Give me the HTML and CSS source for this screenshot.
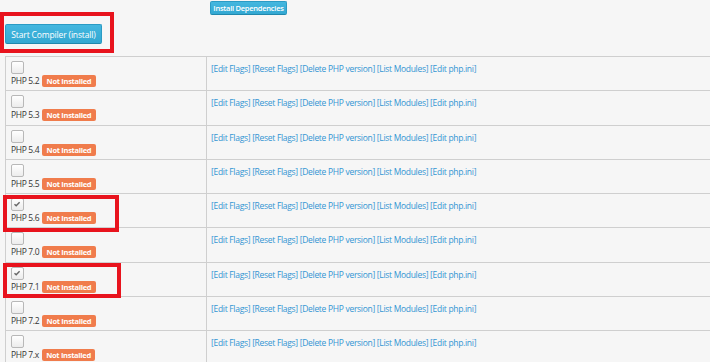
FILE: index.html
```html
<!DOCTYPE html>
<html lang="en">

<head>
    <meta charset="UTF-8">
    <meta name="viewport" content="width=device-width, initial-scale=1.0">
    <title>PHP Compiler</title>
    <link rel="stylesheet" href="styles.css">
</head>

<body>
    <div class="top">
        <div class="top-left">
            <div class="marked">
                <button class="btn btn-big">Start Compiler (install)</button>
                <span class="mark mark-start"></span>
            </div>
        </div>
        <div class="top-right">
            <button class="btn btn-small">Install Dependencies</button>
        </div>
    </div>

    <table class="versions">
        <tr>
            <td class="ver">
                <span class="check"></span>
                <div class="name">PHP 5.2 <span class="badge">Not Installed</span></div>
            </td>
            <td class="links"><a href="#">[Edit Flags]</a> <a href="#">[Reset Flags]</a> <a href="#">[Delete PHP version]</a> <a href="#">[List Modules]</a> <a href="#">[Edit php.ini]</a></td>
        </tr>
        <tr>
            <td class="ver">
                <span class="check"></span>
                <div class="name">PHP 5.3 <span class="badge">Not Installed</span></div>
            </td>
            <td class="links"><a href="#">[Edit Flags]</a> <a href="#">[Reset Flags]</a> <a href="#">[Delete PHP version]</a> <a href="#">[List Modules]</a> <a href="#">[Edit php.ini]</a></td>
        </tr>
        <tr>
            <td class="ver">
                <span class="check"></span>
                <div class="name">PHP 5.4 <span class="badge">Not Installed</span></div>
            </td>
            <td class="links"><a href="#">[Edit Flags]</a> <a href="#">[Reset Flags]</a> <a href="#">[Delete PHP version]</a> <a href="#">[List Modules]</a> <a href="#">[Edit php.ini]</a></td>
        </tr>
        <tr>
            <td class="ver">
                <span class="check"></span>
                <div class="name">PHP 5.5 <span class="badge">Not Installed</span></div>
            </td>
            <td class="links"><a href="#">[Edit Flags]</a> <a href="#">[Reset Flags]</a> <a href="#">[Delete PHP version]</a> <a href="#">[List Modules]</a> <a href="#">[Edit php.ini]</a></td>
        </tr>
        <tr>
            <td class="ver marked">
                <span class="check checked"><svg viewBox="0 0 12 12" width="12" height="12"><path d="M3.5 6.2 L5.2 7.8 L8.6 4.2" fill="none" stroke="#666" stroke-width="1.4"/></svg></span>
                <div class="name">PHP 5.6 <span class="badge">Not Installed</span></div>
                <span class="mark mark-56"></span>
            </td>
            <td class="links"><a href="#">[Edit Flags]</a> <a href="#">[Reset Flags]</a> <a href="#">[Delete PHP version]</a> <a href="#">[List Modules]</a> <a href="#">[Edit php.ini]</a></td>
        </tr>
        <tr>
            <td class="ver">
                <span class="check"></span>
                <div class="name">PHP 7.0 <span class="badge">Not Installed</span></div>
            </td>
            <td class="links"><a href="#">[Edit Flags]</a> <a href="#">[Reset Flags]</a> <a href="#">[Delete PHP version]</a> <a href="#">[List Modules]</a> <a href="#">[Edit php.ini]</a></td>
        </tr>
        <tr>
            <td class="ver marked">
                <span class="check checked"><svg viewBox="0 0 12 12" width="12" height="12"><path d="M3.5 6.2 L5.2 7.8 L8.6 4.2" fill="none" stroke="#666" stroke-width="1.4"/></svg></span>
                <div class="name">PHP 7.1 <span class="badge">Not Installed</span></div>
                <span class="mark mark-71"></span>
            </td>
            <td class="links"><a href="#">[Edit Flags]</a> <a href="#">[Reset Flags]</a> <a href="#">[Delete PHP version]</a> <a href="#">[List Modules]</a> <a href="#">[Edit php.ini]</a></td>
        </tr>
        <tr>
            <td class="ver">
                <span class="check"></span>
                <div class="name">PHP 7.2 <span class="badge">Not Installed</span></div>
            </td>
            <td class="links"><a href="#">[Edit Flags]</a> <a href="#">[Reset Flags]</a> <a href="#">[Delete PHP version]</a> <a href="#">[List Modules]</a> <a href="#">[Edit php.ini]</a></td>
        </tr>
        <tr>
            <td class="ver">
                <span class="check"></span>
                <div class="name">PHP 7.x <span class="badge">Not Installed</span></div>
            </td>
            <td class="links"><a href="#">[Edit Flags]</a> <a href="#">[Reset Flags]</a> <a href="#">[Delete PHP version]</a> <a href="#">[List Modules]</a> <a href="#">[Edit php.ini]</a></td>
        </tr>
    </table>
</body>

</html>
```

FILE: styles.css
```css
body {
    margin: 0;
    font-family: "Open Sans", Arial, sans-serif;
    font-size: 8.5px;
    color: #333;
    background-color: #f6f6f6;
    overflow: hidden;
}

.top {
    display: flex;
    height: 56px;
}

.top-left {
    width: 206px;
    padding-top: 24px;
    padding-left: 5px;
    box-sizing: border-box;
}

.top-right {
    padding-top: 1px;
    padding-left: 4px;
}

.marked {
    position: relative;
}

.mark {
    position: absolute;
    border: 4px solid #e8131d;
    pointer-events: none;
}

.mark-start {
    left: -5px;
    top: -12px;
    width: 106px;
    height: 33px;
}

.mark-56 {
    left: -3px;
    top: 1px;
    width: 108px;
    height: 29px;
}

.mark-71 {
    left: -3px;
    top: 0;
    width: 110px;
    height: 27px;
}

.btn {
    font-family: "Open Sans", Arial, sans-serif;
    color: white;
    border: 1px solid #2b9bc4;
    border-bottom-color: #2088ad;
    border-radius: 2px;
    background: linear-gradient(#44b7df, #33a8d2);
    cursor: pointer;
    padding: 0;
    white-space: nowrap;
}

.btn-big {
    display: block;
    width: 97px;
    height: 20px;
    font-size: 8.5px;
    letter-spacing: -0.15px;
}

.btn-small {
    display: block;
    width: 77px;
    height: 14px;
    font-size: 7.5px;
    font-weight: 600;
    letter-spacing: -0.25px;
}

.versions {
    border-collapse: collapse;
    margin-left: 5px;
    width: 706px;
}

.versions td {
    border: 1px solid #cfcfcf;
    vertical-align: top;
    height: 34.25px;
    box-sizing: border-box;
    padding: 0;
}

.ver {
    width: 201px;
    padding: 4px 0 0 5px !important;
}

.check {
    display: block;
    width: 11px;
    height: 11px;
    border: 1px solid #b8b8b8;
    border-radius: 2px;
    background: linear-gradient(#ffffff, #ececec);
}

.check svg {
    display: block;
    margin: -1px 0 0 -1px;
}

.name {
    line-height: 13px;
    letter-spacing: -0.35px;
}

.badge {
    display: inline-block;
    background-color: #f07c4c;
    color: white;
    font-weight: 700;
    font-size: 7.5px;
    letter-spacing: -0.3px;
    line-height: 12px;
    padding: 0 4.5px;
    border-radius: 2px;
    margin-left: 1px;
}

.links {
    padding: 6px 0 0 4px !important;
    line-height: 12px;
    letter-spacing: -0.3px;
}

.links a {
    color: #3295d3;
    text-decoration: none;
}
```
